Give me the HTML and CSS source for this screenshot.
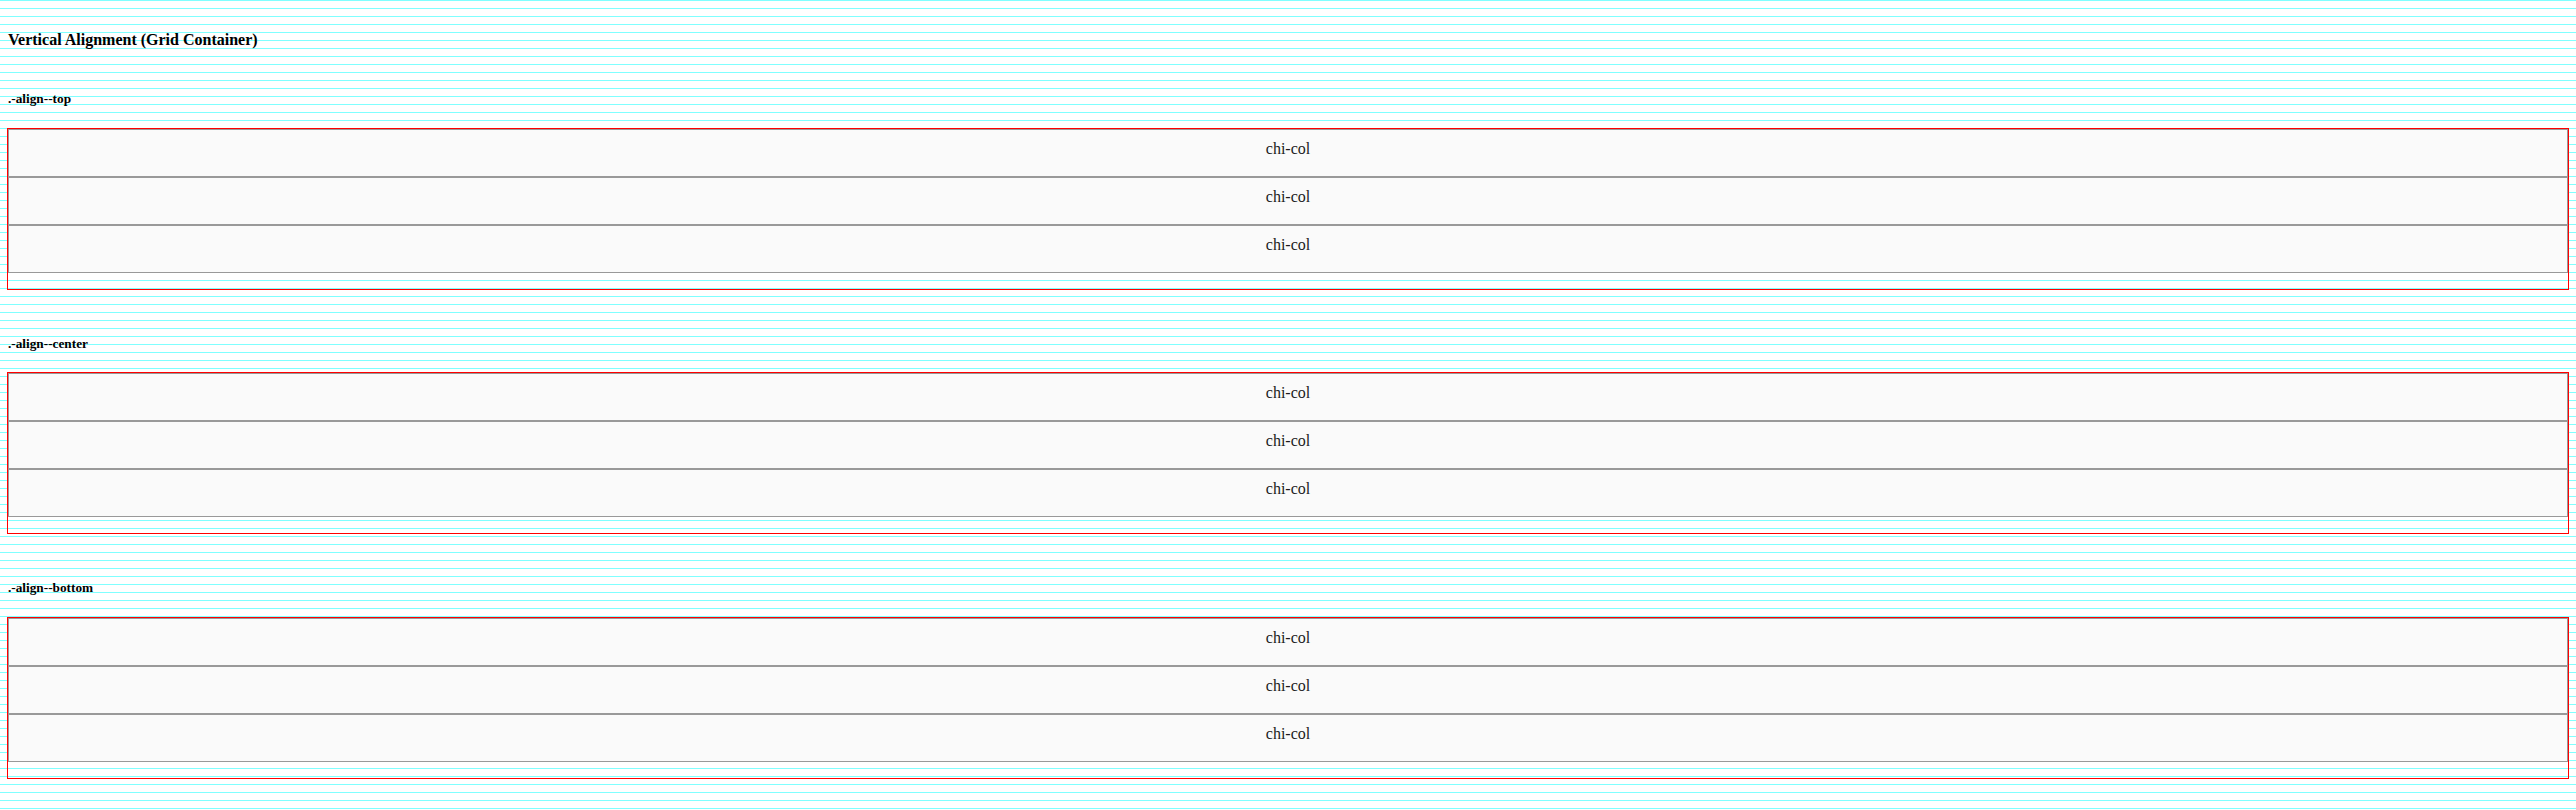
FILE: index.html
```html
<!DOCTYPE html>
<html lang="en">
<head>
<meta charset="utf-8">
<title>Vertical Alignment (Grid Container)</title>
<link rel="stylesheet" href="styles.css">
</head>
<body>
<div class="page">
  <h3 class="page-title">Vertical Alignment (Grid Container)</h3>

  <section class="demo">
    <h5 class="demo-label">.-align--top</h5>
    <div class="chi-grid -align--top">
      <div class="chi-col">chi-col</div>
      <div class="chi-col">chi-col</div>
      <div class="chi-col">chi-col</div>
    </div>
  </section>

  <section class="demo">
    <h5 class="demo-label">.-align--center</h5>
    <div class="chi-grid -align--center">
      <div class="chi-col">chi-col</div>
      <div class="chi-col">chi-col</div>
      <div class="chi-col">chi-col</div>
    </div>
  </section>

  <section class="demo">
    <h5 class="demo-label">.-align--bottom</h5>
    <div class="chi-grid -align--bottom">
      <div class="chi-col">chi-col</div>
      <div class="chi-col">chi-col</div>
      <div class="chi-col">chi-col</div>
    </div>
  </section>
</div>
</body>
</html>
```

FILE: styles.css
```css
html {
  background: #fff repeating-linear-gradient(to bottom, #80ffff 0 1px, transparent 1px 8px);
  min-height: 100%;
}

body {
  margin: 0;
  font-family: "Liberation Serif", "Times New Roman", serif;
  color: #000;
}

.page {
  padding: 0 8px;
  display: flow-root;
}

.page-title {
  font-size: 16px;
  font-weight: bold;
  line-height: 22px;
  margin: 28.6px 0 40.9px;
}

.demo-label {
  font-size: 13.28px;
  font-weight: bold;
  line-height: 15px;
  margin: 0 0 22.5px;
}

.chi-grid {
  display: grid;
  grid-template-columns: 1fr;
  align-content: start;
  height: 160px;
  outline: 1px solid #ff0000;
  margin-bottom: 47px;
}

.chi-col {
  box-sizing: border-box;
  height: 48px;
  padding-top: 10px;
  background: #fafafa;
  border: 1px solid #999999;
  text-align: center;
  font-size: 16px;
  line-height: 18px;
  color: #1a1a1a;
}
```
